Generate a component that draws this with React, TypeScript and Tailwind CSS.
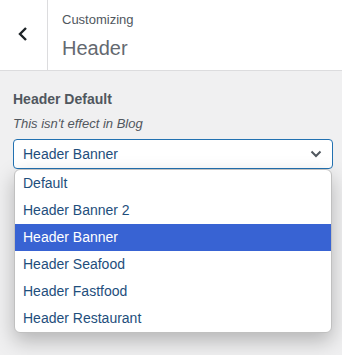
import React from 'react';

const options = ['Default', 'Header Banner 2', 'Header Banner', 'Header Seafood', 'Header Fastfood', 'Header Restaurant'];

const App: React.FC = () => {
  const selected = 'Header Banner';

  return (
    <div className="w-[342px] h-[355px] overflow-hidden bg-[#f0f0f1] font-['Liberation_Sans',Arial,sans-serif]">
      {/* Top bar */}
      <div className="flex h-[71px] bg-white border-b border-[#dcdcde]">
        <div className="w-[48px] border-r border-[#dcdcde] flex items-center justify-center">
          <svg width="12" height="16" viewBox="0 0 12 16" className="ml-[-1px] mt-[-2px]">
            <path d="M9 2 L3 8 L9 14" fill="none" stroke="#1d2327" strokeWidth="2.4" strokeLinejoin="miter" />
          </svg>
        </div>
        <div className="flex flex-col pl-[14px] pt-[11px]">
          <span className="text-[13px] leading-[18px] text-[#50575e]">Customizing</span>
          <span className="text-[20px] leading-[28px] mt-[5px] text-[#646970]">Header</span>
        </div>
      </div>

      {/* Control */}
      <div className="px-[13px] pt-[19px] relative">
        <div className="text-[14px] leading-[18px] font-bold text-[#50575e]">Header Default</div>
        <div className="text-[13px] leading-[18px] italic text-[#50575e] mt-[7px]">This isn't effect in Blog</div>
        <div className="mt-[6px] h-[30px] w-[320px] rounded-[4px] border border-[#2271b1] bg-white flex items-center justify-between pl-[9px] pr-[10px]">
          <span className="text-[14px] text-[#1e4e7c]">{selected}</span>
          <svg width="12" height="8" viewBox="0 0 12 8">
            <path d="M1.5 1.5 L6 6 L10.5 1.5" fill="none" stroke="#50575e" strokeWidth="2" />
          </svg>
        </div>

        <div className="absolute left-[14px] top-[98px] w-[318px] bg-white rounded-[6px] border border-[#c0c0c0] shadow-[0_8px_20px_rgba(0,0,0,0.25)] overflow-hidden">
          {options.map((o) => (
            <div
              key={o}
              className={`h-[27px] flex items-center pl-[8px] text-[14px] ${
                o === selected ? 'bg-[#3863d3] text-white' : 'text-[#1e4e7c]'
              }`}
            >
              {o}
            </div>
          ))}
        </div>
      </div>
    </div>
  );
};

export default App;
